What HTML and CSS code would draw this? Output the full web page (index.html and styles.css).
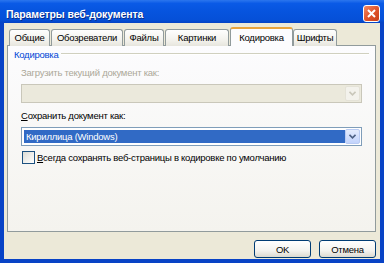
FILE: index.html
```html
<html>
    <head>
        <link rel="stylesheet" href="styles.css">
    </head>
    <body>
        <div class="window">
            <!--title bar-->
            <div class="titlebar">
                <span class="title">Параметры веб-документа</span>
                <span class="closebtn">
                    <svg width="9" height="9" viewBox="0 0 9 9"><path d="M1 1 L8 8 M8 1 L1 8" stroke="#ffffff" stroke-width="2"/></svg>
                </span>
            </div>

            <div class="client">
                <!--tabs-->
                <div class="tabs">
                    <div class="tab t1">Общие</div>
                    <div class="tab t2">Обозреватели</div>
                    <div class="tab t3">Файлы</div>
                    <div class="tab t4">Картинки</div>
                    <div class="tab active t5">Кодировка</div>
                    <div class="tab t6">Шрифты</div>
                </div>

                <!--tab page-->
                <div class="panel">
                    <div class="group">
                        <span class="grouplabel">Кодировка</span>
                        <span class="groupline"></span>
                    </div>

                    <div class="label disabled">Загрузить текущий документ как:</div>
                    <div class="combo off">
                        <span class="value"></span>
                        <span class="arrow"><svg width="7" height="5" viewBox="0 0 7 5"><path d="M0.5 0.8 L3.5 3.8 L6.5 0.8" fill="none" stroke="#c9c7ba" stroke-width="1.6"/></svg></span>
                    </div>

                    <div class="label"><u>С</u>охранить документ как:</div>
                    <div class="combo">
                        <span class="value selected">Кириллица (Windows)</span>
                        <span class="arrow"><svg width="7" height="5" viewBox="0 0 7 5"><path d="M0.5 0.8 L3.5 3.8 L6.5 0.8" fill="none" stroke="#4d6185" stroke-width="1.6"/></svg></span>
                    </div>

                    <div class="check">
                        <span class="box"></span>
                        <span class="checktext"><u>В</u>сегда сохранять веб-страницы в кодировке по умолчанию</span>
                    </div>
                </div>

                <!--dialog buttons-->
                <div class="buttons">
                    <button type="button" class="xpbutton">OK</button>
                    <button type="button" class="xpbutton">Отмена</button>
                </div>
            </div>
        </div>
    </body>
</html>
```

FILE: styles.css
```css
body{
    margin:0;
    font-family:"Liberation Sans", Arial, sans-serif;
    font-size:9.5px;
    letter-spacing:-0.25px;
    color:#000000;}

/*outer blue frame of the dialog*/
.window{
    width:384px;
    height:263px;
    background:#0843c6;
    display:flex;
    flex-direction:column;}

.titlebar{
    height:23px;
    display:flex;
    align-items:center;
    justify-content:space-between;
    padding:0 4px 0 6px;
    background:linear-gradient(#2b76ee 0%, #0a5ae6 15%, #0654de 50%, #0550d8 85%, #0443c4 100%);}

.title{
    color:#ffffff;
    font-weight:bold;
    font-size:10.5px;
    letter-spacing:-0.1px;
    text-shadow:1px 1px 0 #0a2f8a;
    padding-top:4px;}

.closebtn{
    width:15px;
    height:15px;
    margin-top:4px;
    border:1px solid #ffffff;
    border-radius:3px;
    background:linear-gradient(135deg, #f08a66 0%, #e0562d 50%, #c93e16 100%);
    display:flex;
    align-items:center;
    justify-content:center;}

/*beige client area*/
.client{
    flex:1;
    margin:0 4px 4px 4px;
    background:#ece9d8;
    padding:4px 4px 0 3px;
    display:flex;
    flex-direction:column;}

.tabs{
    display:flex;
    align-items:flex-end;
    height:19px;
    padding-left:2px;
    position:relative;
    z-index:1;}

.tab{
    height:17px;
    box-sizing:border-box;
    border:1px solid #919b9c;
    border-bottom:none;
    border-radius:3px 3px 0 0;
    background:linear-gradient(#fefefe, #f1f0ea 70%, #e6e5dd);
    text-align:center;
    line-height:16px;
    margin-right:1px;}

.tab.active{
    height:19px;
    background:#fcfcfe;
    border-top:2px solid #e9a43c;
    margin-right:0;
    line-height:17px;}

.t1{width:41px;}
.t2{width:72px;}
.t3{width:40px;}
.t4{width:64px;}
.t5{width:63px;}
.t6{width:44px;}

.panel{
    height:187px;
    box-sizing:border-box;
    margin-top:-1px;
    border:1px solid #919b9c;
    background:linear-gradient(#fcfcfe, #f4f3ee);
    padding:2px 13px 0 13px;}

.group{
    display:flex;
    align-items:center;
    height:12px;
    margin-left:-7px;
    margin-right:-7px;}

.grouplabel{
    color:#0046d5;
    padding-right:3px;}

.groupline{
    flex:1;
    height:0;
    border-top:1px solid #d0d0bf;
    border-bottom:1px solid #ffffff;}

.label{
    margin-top:7px;
    height:12px;}

.disabled{
    color:#aca899;}

.combo{
    margin-top:5px;
    height:19px;
    box-sizing:border-box;
    border:1px solid #7f9db9;
    background:#ffffff;
    display:flex;
    padding:2px 1px 2px 2px;}

.combo.off{
    border-color:#c9c7ba;
    background:#ebe9dc;}

.value{
    flex:1;
    line-height:13px;
    padding-left:2px;}

.selected{
    background:#316ac5;
    color:#ffffff;}

.arrow{
    width:15px;
    margin:-1px 0 -1px 0;
    box-sizing:border-box;
    border:1px solid #b9cbf3;
    border-radius:2px;
    background:linear-gradient(#e4ecfd, #c2d3fc);
    display:flex;
    align-items:center;
    justify-content:center;}

.off .arrow{
    border-color:#e4e2d7;
    background:#f3f2ec;}

.check{
    margin-top:5px;
    margin-left:1px;
    display:flex;
    align-items:center;}

.box{
    flex:none;
    width:13px;
    height:13px;
    box-sizing:border-box;
    border:1px solid #1c5180;
    background:linear-gradient(135deg, #dcdcd5, #ffffff);
    margin-right:2px;}

.buttons{
    display:flex;
    justify-content:flex-end;
    padding-top:8px;}

button.xpbutton{
    width:57px;
    height:18px;
    margin-left:8px;
    font-family:"Liberation Sans", Arial, sans-serif;
    font-size:9.5px;
    letter-spacing:-0.25px;
    border:1px solid #003c74;
    border-radius:3px;
    background:linear-gradient(#ffffff, #f3f3ef 60%, #dcdad0);
    padding:0;
    color:#000000;}
```
